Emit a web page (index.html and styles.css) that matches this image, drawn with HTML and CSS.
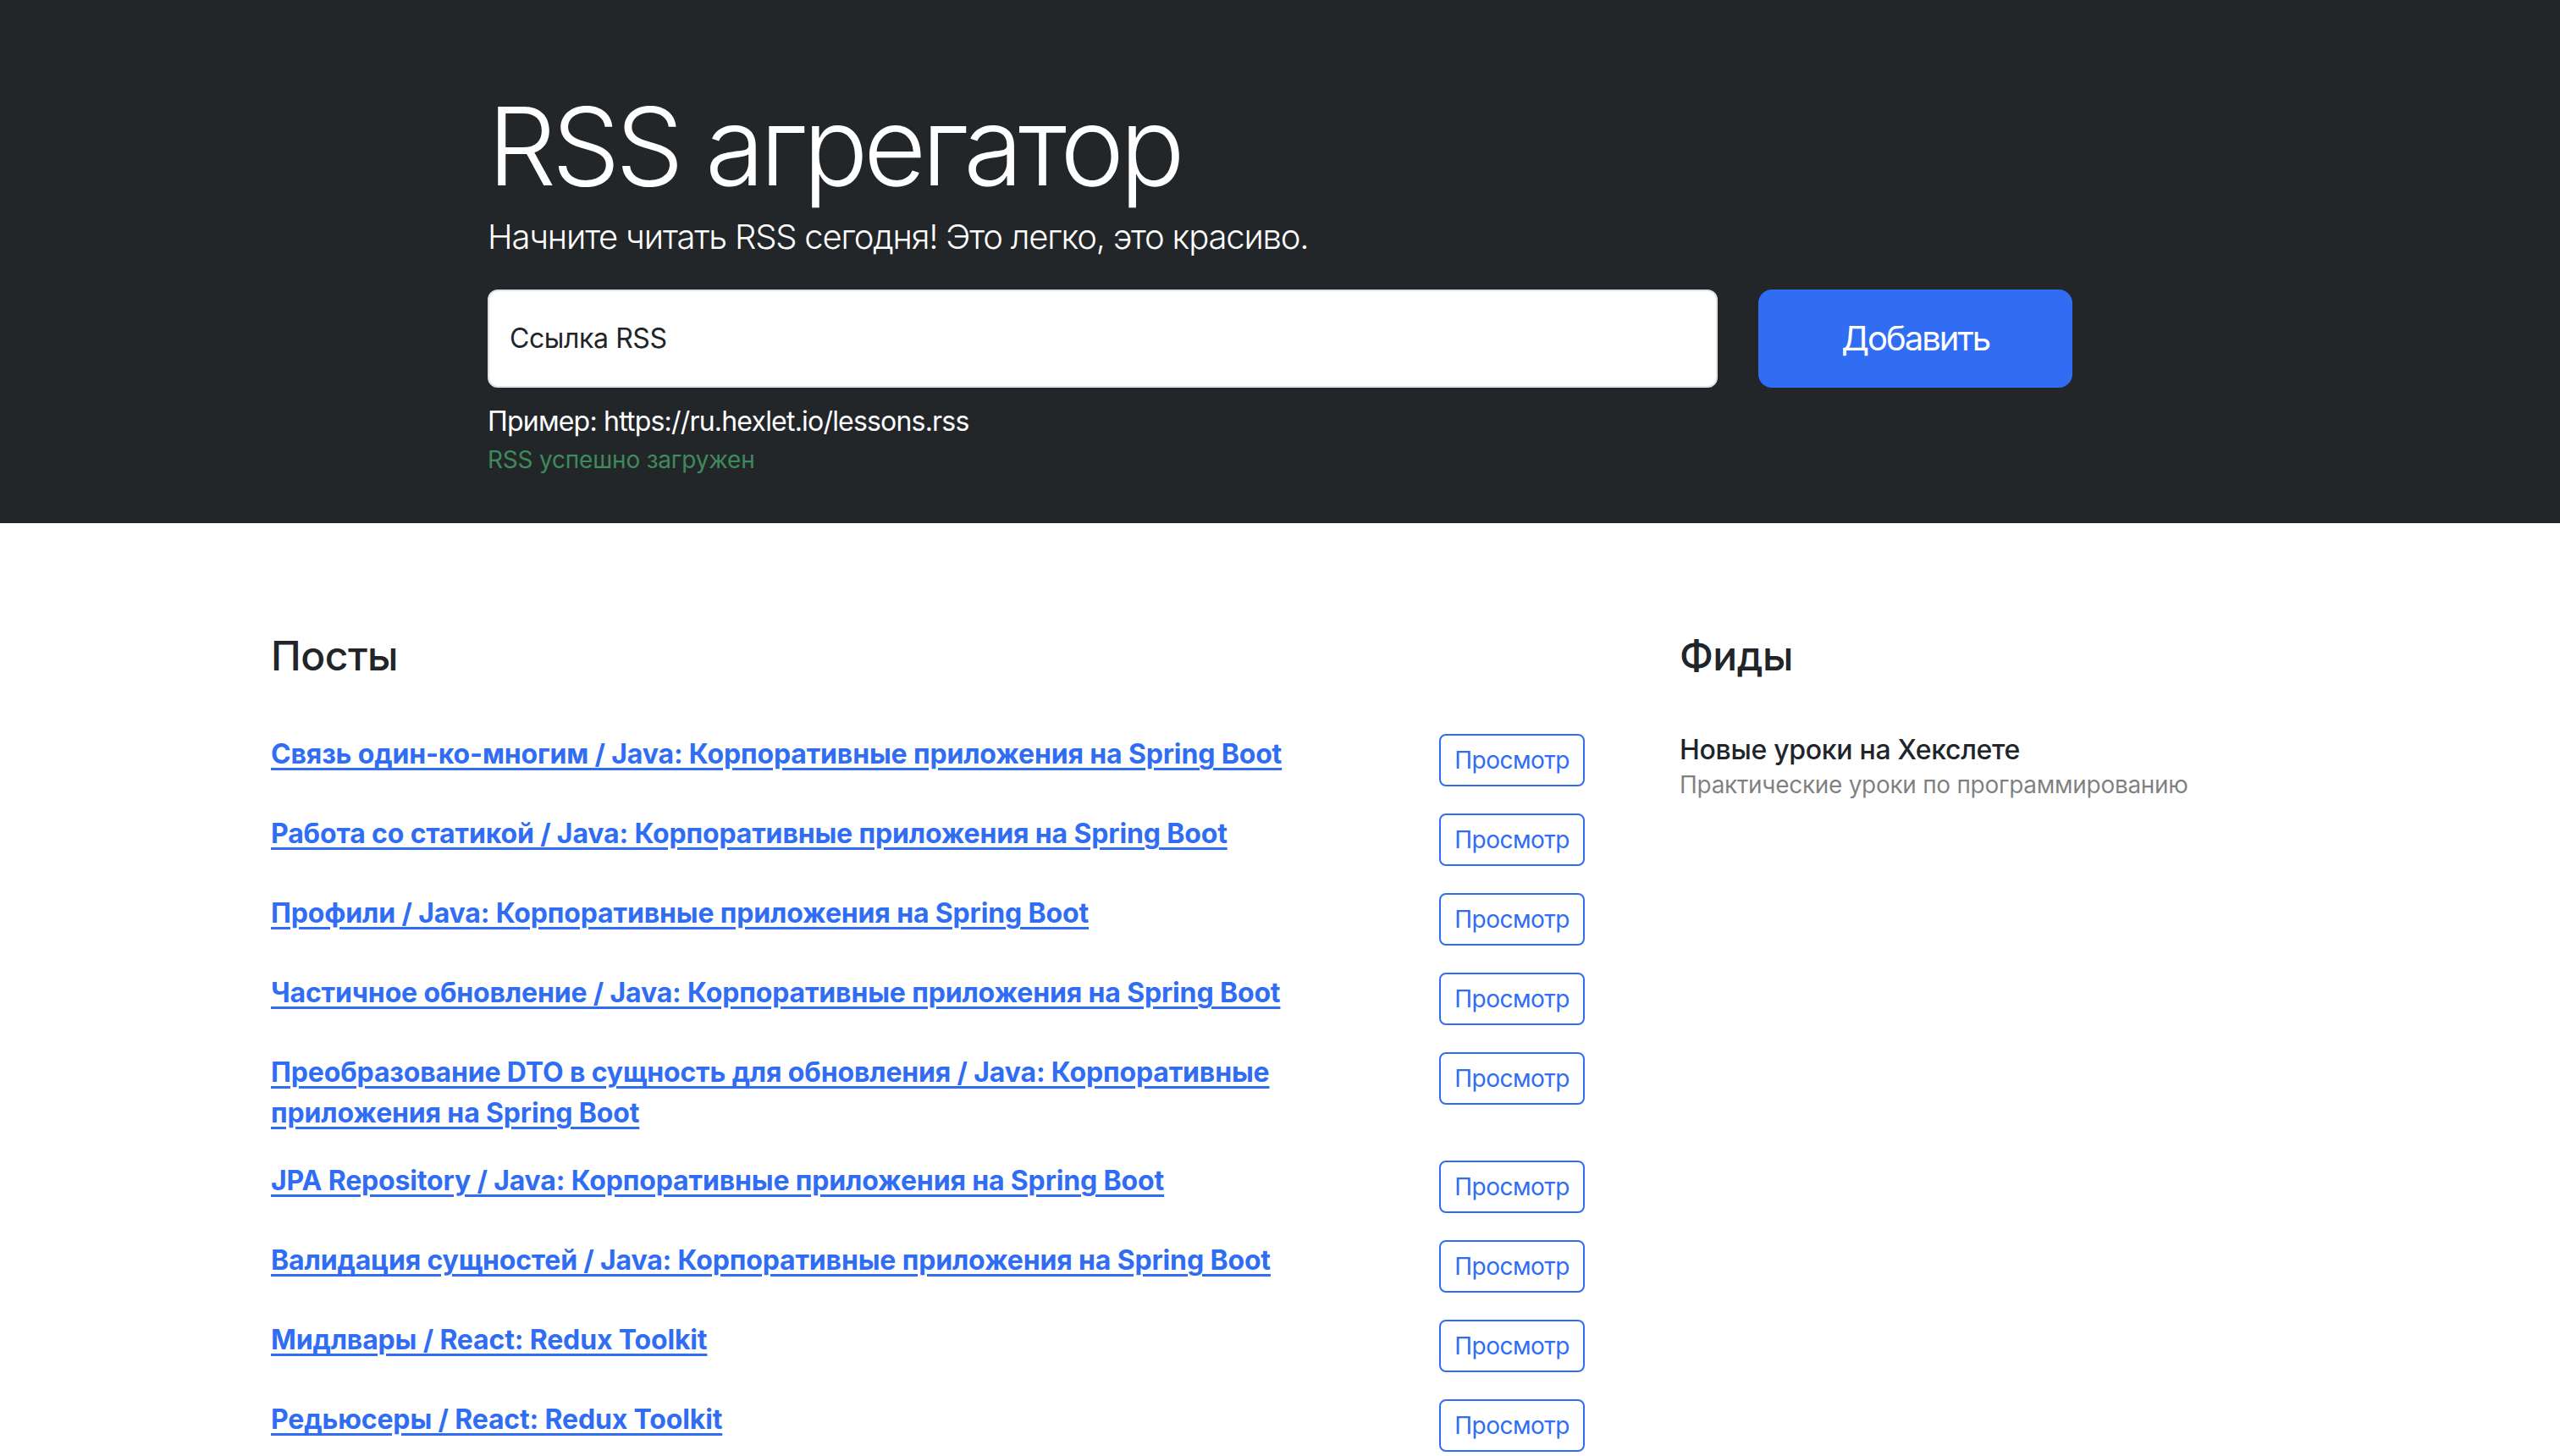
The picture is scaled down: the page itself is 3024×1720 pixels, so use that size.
FILE: index.html
```html
<!DOCTYPE html>
<html lang="ru">
<head>
<meta charset="utf-8">
<title>RSS агрегатор</title>
<link rel="stylesheet" href="styles.css">
</head>
<body>
<section class="hero">
  <div class="hero-inner">
    <h1 class="hero-title">RSS агрегатор</h1>
    <p class="lead">Начните читать RSS сегодня! Это легко, это красиво.</p>
    <form class="rss-form">
      <div class="floating">
        <input class="url-input" type="text" aria-label="url">
        <label class="url-label">Ссылка RSS</label>
      </div>
      <button type="button" class="btn-add">Добавить</button>
    </form>
    <p class="example">Пример: https://ru.hexlet.io/lessons.rss</p>
    <p class="feedback">RSS успешно загружен</p>
  </div>
</section>
<section class="content">
  <div class="posts">
    <div class="card-body"><h2 class="card-title">Посты</h2></div>
    <ul class="list-group">
      <li class="post-item"><a href="#" class="post-link">Связь один-ко-многим / Java: Корпоративные приложения на Spring Boot</a><button type="button" class="btn-view">Просмотр</button></li>
      <li class="post-item"><a href="#" class="post-link">Работа со статикой / Java: Корпоративные приложения на Spring Boot</a><button type="button" class="btn-view">Просмотр</button></li>
      <li class="post-item"><a href="#" class="post-link">Профили / Java: Корпоративные приложения на Spring Boot</a><button type="button" class="btn-view">Просмотр</button></li>
      <li class="post-item"><a href="#" class="post-link">Частичное обновление / Java: Корпоративные приложения на Spring Boot</a><button type="button" class="btn-view">Просмотр</button></li>
      <li class="post-item"><a href="#" class="post-link">Преобразование DTO в сущность для обновления / Java: Корпоративные приложения на Spring Boot</a><button type="button" class="btn-view">Просмотр</button></li>
      <li class="post-item"><a href="#" class="post-link">JPA Repository / Java: Корпоративные приложения на Spring Boot</a><button type="button" class="btn-view">Просмотр</button></li>
      <li class="post-item"><a href="#" class="post-link">Валидация сущностей / Java: Корпоративные приложения на Spring Boot</a><button type="button" class="btn-view">Просмотр</button></li>
      <li class="post-item"><a href="#" class="post-link">Мидлвары / React: Redux Toolkit</a><button type="button" class="btn-view">Просмотр</button></li>
      <li class="post-item"><a href="#" class="post-link">Редьюсеры / React: Redux Toolkit</a><button type="button" class="btn-view">Просмотр</button></li>
    </ul>
  </div>
  <div class="feeds">
    <div class="card-body"><h2 class="card-title">Фиды</h2></div>
    <ul class="list-group">
      <li class="feed-item">
        <h3 class="feed-title">Новые уроки на Хекслете</h3>
        <p class="feed-desc">Практические уроки по программированию</p>
      </li>
    </ul>
  </div>
</section>
</body>
</html>
```
FILE: styles.css
```css
html {
  scrollbar-width: none;
}
* {
  box-sizing: border-box;
}
body {
  margin: 0;
  font-family: Inter, "Noto Sans", "DejaVu Sans", sans-serif;
  font-size: 32px;
  line-height: 1.5;
  color: #212529;
  background: #fff;
}
.hero {
  background: #232629;
  padding: 96px;
  color: #fff;
}
.hero-inner {
  width: 1872px;
  margin: 0 auto;
  position: relative;
}
.hero-title {
  margin: 0;
  font-size: 128px;
  font-weight: 300;
  line-height: 1.2;
  letter-spacing: -5.5px;
}
.lead {
  margin: 0 0 32px;
  font-size: 40px;
  font-weight: 300;
  line-height: 1.5;
  letter-spacing: -1.2px;
}
.rss-form {
  display: flex;
  gap: 48px;
  margin: 0;
}
.floating {
  flex: 1;
  position: relative;
}
.url-input {
  display: block;
  width: 100%;
  height: 116px;
  border: 2px solid #dee2e6;
  border-radius: 12px;
  background: #fff;
  font: inherit;
  padding: 32px 24px;
}
.url-label {
  position: absolute;
  top: 0;
  left: 0;
  height: 100%;
  padding: 32px 24px;
  border: 2px solid transparent;
  color: #212529;
  font-size: 32px;
  line-height: 1.5;
  letter-spacing: -0.4px;
}
.btn-add {
  height: 116px;
  padding: 0 96px;
  border: 2px solid #306df3;
  border-radius: 16px;
  background: #306df3;
  color: #fff;
  font-family: inherit;
  font-size: 40px;
  line-height: 1.5;
  letter-spacing: -2px;
}
.example {
  margin: 16px 0 0;
  font-size: 32px;
  line-height: 1.5;
  letter-spacing: -0.8px;
}
.feedback {
  position: absolute;
  margin: 0;
  font-size: 28px;
  line-height: 1.5;
  color: #3d8a5c;
  letter-spacing: -0.2px;
}
.content {
  width: 2640px;
  margin: 0 auto;
  padding: 96px;
  display: grid;
  grid-template-columns: 1616px 784px;
  column-gap: 48px;
}
.card-body {
  padding: 32px;
}
.card-title {
  margin: 0 0 16px;
  font-size: 48px;
  font-weight: 500;
  line-height: 1.2;
  letter-spacing: -0.5px;
}
.list-group {
  list-style: none;
  margin: 0;
  padding: 0;
}
.post-item {
  display: flex;
  justify-content: space-between;
  align-items: flex-start;
  padding: 16px 32px;
}
.post-link {
  font-weight: 700;
  color: #306df3;
  text-decoration: underline;
  text-decoration-thickness: 3px;
  text-underline-offset: 5px;
  letter-spacing: -0.15px;
}
.btn-view {
  flex-shrink: 0;
  padding: 8px 16px;
  border: 2px solid #306df3;
  border-radius: 8px;
  background: #fff;
  color: #306df3;
  font-family: inherit;
  font-size: 28px;
  line-height: 1.5;
  letter-spacing: -0.5px;
}
.feed-item {
  padding: 16px 32px;
}
.feed-title {
  margin: 0;
  font-size: 32px;
  font-weight: 500;
  line-height: 1.2;
  letter-spacing: -0.3px;
}
.feed-desc {
  margin: 0;
  font-size: 28px;
  line-height: 1.5;
  color: rgba(0, 0, 0, 0.5);
  letter-spacing: -0.3px;
}
```
